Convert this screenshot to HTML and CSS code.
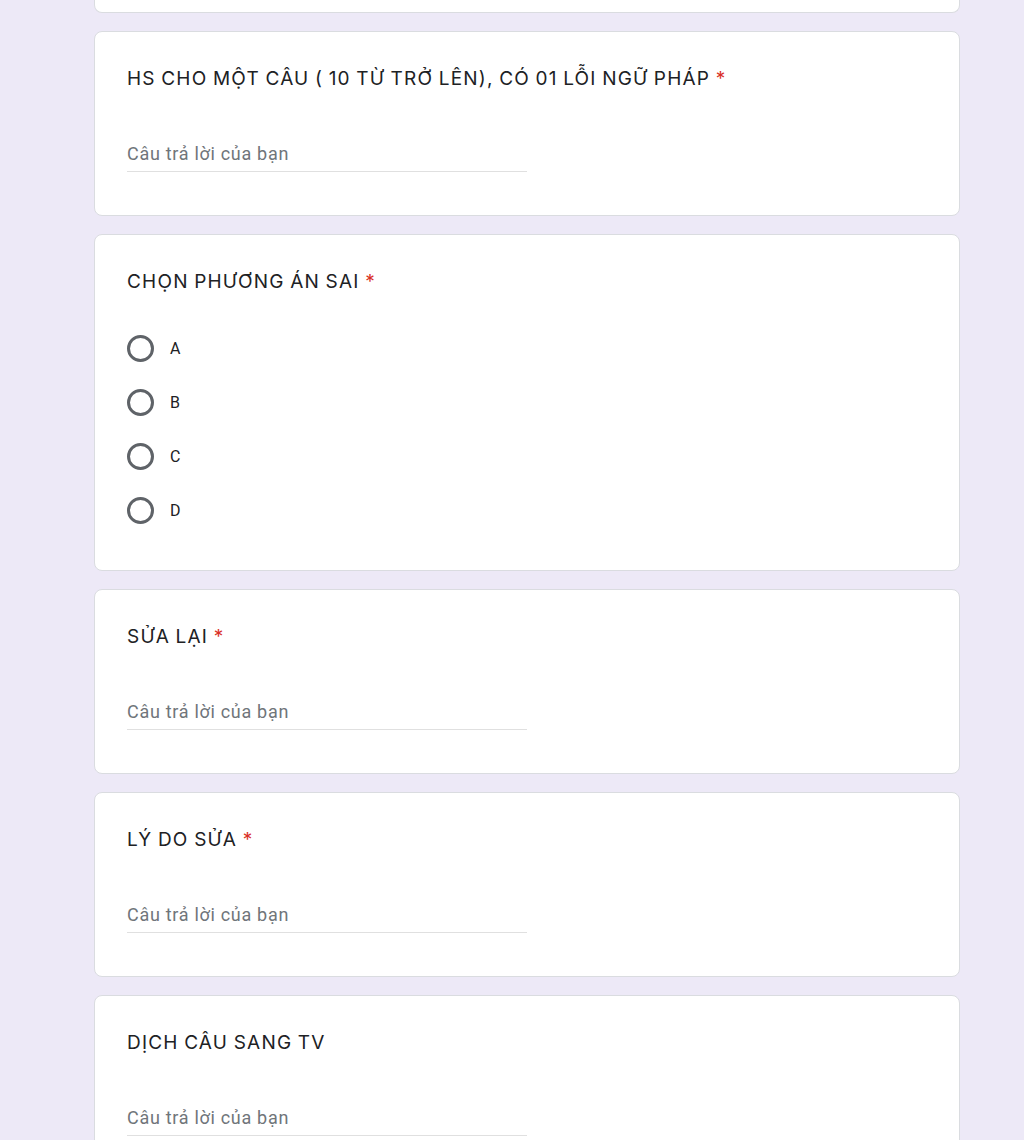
FILE: index.html
```html
<!DOCTYPE html>
<html lang="vi">
<head>
<meta charset="utf-8">
<title>Biểu mẫu</title>
<link rel="stylesheet" href="styles.css">
</head>
<body>
<main class="form">
  <div class="card card-tail"></div>

  <section class="card">
    <h2 class="q-title">HS CHO MỘT CÂU ( 10 TỪ TRỞ LÊN), CÓ 01 LỖI NGỮ PHÁP <span class="req">*</span></h2>
    <div class="answer">Câu trả lời của bạn</div>
  </section>

  <section class="card">
    <h2 class="q-title">CHỌN PHƯƠNG ÁN SAI <span class="req">*</span></h2>
    <div class="options">
      <label class="option"><span class="radio"></span><span class="opt-label">A</span></label>
      <label class="option"><span class="radio"></span><span class="opt-label">B</span></label>
      <label class="option"><span class="radio"></span><span class="opt-label">C</span></label>
      <label class="option"><span class="radio"></span><span class="opt-label">D</span></label>
    </div>
  </section>

  <section class="card">
    <h2 class="q-title">SỬA LẠI <span class="req">*</span></h2>
    <div class="answer">Câu trả lời của bạn</div>
  </section>

  <section class="card">
    <h2 class="q-title">LÝ DO SỬA <span class="req">*</span></h2>
    <div class="answer">Câu trả lời của bạn</div>
  </section>

  <section class="card">
    <h2 class="q-title">DỊCH CÂU SANG TV</h2>
    <div class="answer">Câu trả lời của bạn</div>
  </section>
</main>
</body>
</html>
```

FILE: styles.css
```css
html, body {
  margin: 0;
  padding: 0;
}
body {
  background: #ede9f7;
  font-family: Roboto, "Liberation Sans", sans-serif;
  color: #202124;
  height: 1140px;
  overflow: hidden;
}
.form {
  width: 866px;
  margin-left: 94px;
  display: flex;
  flex-direction: column;
  gap: 18px;
}
.card {
  background: #ffffff;
  border: 1px solid #dadce0;
  border-radius: 8px;
  padding: 35px 32px 43px;
  flex-shrink: 0;
}
.card-tail {
  height: 13px;
  padding: 0;
  border-top: none;
  border-radius: 0 0 8px 8px;
  box-sizing: border-box;
}
.q-title {
  margin: 0;
  font-family: Inter, "Open Sans", sans-serif;
  font-weight: 400;
  font-size: 19px;
  line-height: 24px;
  letter-spacing: 1.2px;
  word-spacing: -1px;
  color: #202124;
}
.req {
  color: #d93025;
}
.answer {
  margin-top: 51px;
  width: 400px;
  height: 29px;
  border-bottom: 1px solid #e0e0e0;
  font-size: 18px;
  line-height: 24px;
  letter-spacing: 0.7px;
  color: #70757a;
}
.options {
  margin-top: 27px;
  display: flex;
  flex-direction: column;
}
.option {
  height: 54px;
  display: flex;
  align-items: center;
  gap: 16px;
}
.options .option:last-child {
  margin-bottom: -10px;
}
.radio {
  width: 21px;
  height: 21px;
  border: 3px solid #5f6368;
  border-radius: 50%;
  flex-shrink: 0;
}
.opt-label {
  font-size: 16px;
  color: #202124;
}
```
